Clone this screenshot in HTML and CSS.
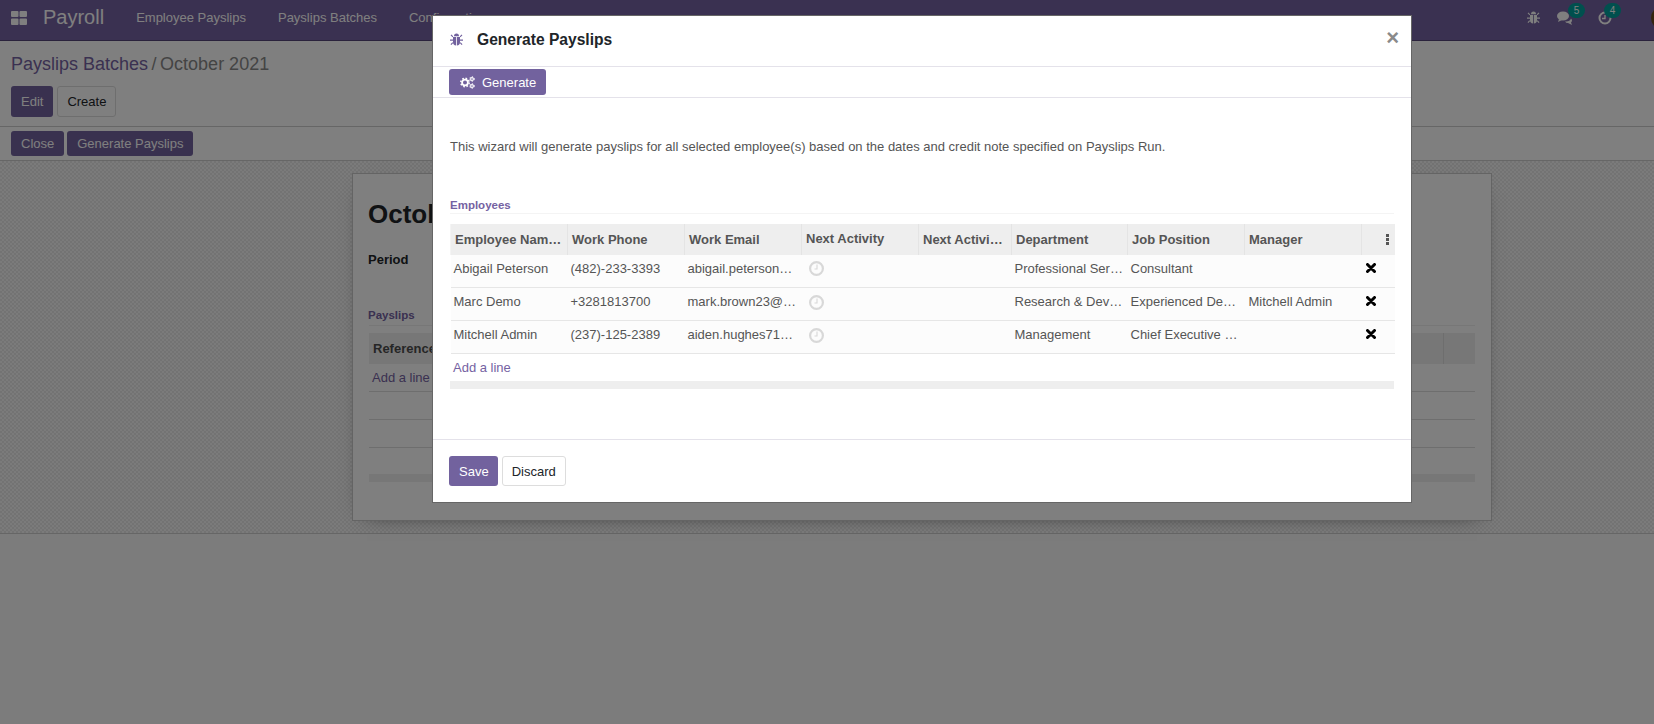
FILE: index.html
```html
<!DOCTYPE html>
<html lang="en">
<head>
  <meta charset="UTF-8" />
  <title>Payroll</title>
  <link rel="stylesheet" href="styles.css">
</head>
<body>
  <header class="navbar">
    <svg class="apps-icon" width="16" height="14" viewBox="0 0 16 14"><path d="M0 1Q0 0 1 0h5.500q1 0 1 1v4q0 1-1 1H1Q0 6 0 5zM8.500 1q0-1 1-1H15q1 0 1 1v4q0 1-1 1H9.500q-1 0-1-1zM0 8.500q0-1 1-1h5.500q1 0 1 1V13q0 1-1 1H1q-1 0-1-1zM8.500 8.500q0-1 1-1H15q1 0 1 1V13q0 1-1 1H9.500q-1 0-1-1z" fill="currentColor"/></svg>
    <span class="brand">Payroll</span>
    <nav class="menu">
      <a>Employee Payslips</a>
      <a>Payslips Batches</a>
      <a>Configuration</a>
    </nav>
    <div class="systray">
      <svg class="bug" width="13" height="13" viewBox="0 0 13 13"><path d="M4 3.200Q4 .6 6.500 .6T9 3.200zM3 4h3.100v8.500Q3 12.300 3 9zM6.900 4H10v5q0 3.300-3.100 3.500zM.6 2.200l.9-.8L3.300 3.500l-.8.800zM12.400 2.200l-.9-.8L9.700 3.500l.8.800zM0 6.500h3v1.200H0zM10 6.500h3v1.200h-3zM2.400 9.300l.8.800L1.400 12l-.9-.8zM10.600 9.300l-.8.800L11.600 12l.9-.8z" fill="currentColor"/></svg>
      <span class="tray-item tray-chat">
        <svg width="16" height="14" viewBox="0 0 16 14"><ellipse cx="6" cy="5" rx="6" ry="4.500" fill="currentColor"/><path d="M2 8 1 11l4-2zM9 10.500q4 0 5-3 2 2 0 4l1 2.500-4-2q-2 0-3-1.500z" fill="currentColor"/></svg>
        <b class="badge">5</b>
      </span>
      <span class="tray-item tray-clock">
        <svg width="14" height="14" viewBox="0 0 14 14"><circle cx="7" cy="7" r="5.500" fill="none" stroke="currentColor" stroke-width="2"/><path d="M7 4v3.500H4" fill="none" stroke="currentColor" stroke-width="1.300"/></svg>
        <b class="badge">4</b>
      </span>
      <span class="avatar"></span>
    </div>
  </header>

  <section class="control-panel">
    <h2 class="breadcrumb"><a>Payslips Batches</a><span class="sep">/</span><span>October 2021</span></h2>
    <div class="actions">
      <button class="btn btn-primary btn-edit">Edit</button>
      <button class="btn btn-plain btn-edit">Create</button>
    </div>
  </section>
  <div class="statusbar">
    <button class="btn btn-primary">Close</button>
    <button class="btn btn-primary">Generate Payslips</button>
  </div>

  <main class="sheet-bg">
    <div class="sheet">
      <h1 class="sheet-title">October 2021</h1>
      <div class="sheet-label">Period</div>
      <div class="sheet-section">Payslips</div>
      <div class="sheet-thead">Reference<span class="sheet-col"></span></div>
      <div class="sheet-row"><a>Add a line</a></div>
      <div class="sheet-row"></div>
      <div class="sheet-row"></div>
      <div class="sheet-bar"></div>
    </div>
  </main>

  <div class="backdrop"></div>

  <div class="modal">
    <div class="modal-head">
      <svg class="modal-bug" width="13" height="13" viewBox="0 0 13 13"><path d="M4 3.200Q4 .6 6.500 .6T9 3.200zM3 4h3.100v8.500Q3 12.300 3 9zM6.900 4H10v5q0 3.300-3.100 3.500zM.6 2.200l.9-.8L3.300 3.500l-.8.800zM12.400 2.200l-.9-.8L9.700 3.500l.8.800zM0 6.500h3v1.200H0zM10 6.500h3v1.200h-3zM2.400 9.300l.8.800L1.400 12l-.9-.8zM10.600 9.300l-.8.800L11.600 12l.9-.8z" fill="currentColor"/></svg>
      <h4 class="modal-title">Generate Payslips</h4>
      <span class="modal-close">×</span>
    </div>
    <div class="modal-toolbar">
      <button class="btn btn-modal btn-generate">
        <svg width="15" height="13" viewBox="0 0 15 13" fill="none" stroke="currentColor"><circle cx="5" cy="6.500" r="2.900" stroke-width="1.800"/><circle cx="5" cy="6.500" r="4.200" stroke-width="1.500" stroke-dasharray="1.650 1.650"/><circle cx="12" cy="3" r="1.400" stroke-width="1.100"/><circle cx="12" cy="3" r="2.300" stroke-width="1" stroke-dasharray="1.200 1.200"/><circle cx="12" cy="10" r="1.400" stroke-width="1.100"/><circle cx="12" cy="10" r="2.300" stroke-width="1" stroke-dasharray="1.200 1.200"/></svg>
        Generate
      </button>
    </div>
    <div class="modal-body">
      <p class="intro">This wizard will generate payslips for all selected employee(s) based on the dates and credit note specified on Payslips Run.</p>
      <div class="section-title">Employees</div>
      <table class="emp-table">
        <colgroup>
          <col class="c-m"><col class="c-m"><col class="c-m"><col class="c-m"><col class="c-s"><col class="c-n"><col class="c-m"><col class="c-m"><col class="c-x">
        </colgroup>
        <thead>
          <tr>
            <th>Employee Nam…</th>
            <th>Work Phone</th>
            <th>Work Email</th>
            <th class="th-raised">Next Activity</th>
            <th>Next Activi…</th>
            <th>Department</th>
            <th>Job Position</th>
            <th>Manager</th>
            <th class="th-opt"><svg width="3" height="11" viewBox="0 0 3 11"><path d="M0 0h3v3H0zM0 4h3v3H0zM0 8h3v3H0z" fill="currentColor"/></svg></th>
          </tr>
        </thead>
        <tbody>
          <tr>
            <td>Abigail Peterson</td>
            <td>(482)-233-3393</td>
            <td>abigail.peterson…</td>
            <td class="td-clock"><svg width="15" height="15" viewBox="0 0 15 15"><circle cx="7.500" cy="7.500" r="6.400" fill="none" stroke="#d8d8d8" stroke-width="2.200"/><path d="M8 3.500V8H5.500" fill="none" stroke="#d8d8d8" stroke-width="1.100"/></svg></td>
            <td></td>
            <td>Professional Ser…</td>
            <td>Consultant</td>
            <td></td>
            <td class="td-del"><svg width="10" height="10" viewBox="0 0 10 10"><path d="M1.500 1.500l7 7M8.500 1.500l-7 7" stroke="#000" stroke-width="3" stroke-linecap="round"/></svg></td>
          </tr>
          <tr>
            <td>Marc Demo</td>
            <td>+3281813700</td>
            <td>mark.brown23@…</td>
            <td class="td-clock"><svg width="15" height="15" viewBox="0 0 15 15"><circle cx="7.500" cy="7.500" r="6.400" fill="none" stroke="#d8d8d8" stroke-width="2.200"/><path d="M8 3.500V8H5.500" fill="none" stroke="#d8d8d8" stroke-width="1.100"/></svg></td>
            <td></td>
            <td>Research &amp; Dev…</td>
            <td>Experienced De…</td>
            <td class="td-manager">Mitchell Admin</td>
            <td class="td-del"><svg width="10" height="10" viewBox="0 0 10 10"><path d="M1.500 1.500l7 7M8.500 1.500l-7 7" stroke="#000" stroke-width="3" stroke-linecap="round"/></svg></td>
          </tr>
          <tr>
            <td>Mitchell Admin</td>
            <td>(237)-125-2389</td>
            <td>aiden.hughes71…</td>
            <td class="td-clock"><svg width="15" height="15" viewBox="0 0 15 15"><circle cx="7.500" cy="7.500" r="6.400" fill="none" stroke="#d8d8d8" stroke-width="2.200"/><path d="M8 3.500V8H5.500" fill="none" stroke="#d8d8d8" stroke-width="1.100"/></svg></td>
            <td></td>
            <td>Management</td>
            <td>Chief Executive …</td>
            <td></td>
            <td class="td-del"><svg width="10" height="10" viewBox="0 0 10 10"><path d="M1.500 1.500l7 7M8.500 1.500l-7 7" stroke="#000" stroke-width="3" stroke-linecap="round"/></svg></td>
          </tr>
        </tbody>
      </table>
      <div class="add-line"><a>Add a line</a></div>
      <div class="table-foot"></div>
    </div>
    <div class="modal-foot">
      <button class="btn btn-modal btn-tall btn-save">Save</button>
      <button class="btn btn-white btn-tall">Discard</button>
    </div>
  </div>
</body>
</html>
```

FILE: styles.css
```css
html,
body {
  height: 100%;
}

body {
  margin: 0;
  height: 724px;
  overflow: hidden;
  position: relative;
  background-color: #f8f8f8;
  color: #4c4c4c;
  font-family: "Liberation Sans", Arial, sans-serif;
  font-size: 13px;
}

.btn {
  border: 1px solid transparent;
  border-radius: 3px;
  padding: 0 9px;
  font-family: inherit;
  font-size: 13px;
  line-height: 1;
}

.btn-primary {
  height: 25px;
  background-color: #72629e;
  color: #fff;
}

.btn-plain {
  background-color: #fff;
  border-color: #ddd;
  color: #212529;
}

.btn-edit {
  height: 31px;
}

/* top bar */
.navbar {
  height: 41px;
  box-sizing: border-box;
  display: flex;
  align-items: center;
  padding-bottom: 5px;
  background-color: #7562a2;
  border-bottom: 1px solid #544578;
  color: #fff;
}

.apps-icon {
  margin-left: 11px;
}

.brand {
  margin-left: 16px;
  font-size: 20px;
}

.menu {
  display: flex;
  gap: 32px;
  margin-left: 32px;
}

.systray {
  margin-left: auto;
  display: flex;
  align-items: center;
}

.bug {
  margin-right: 17px;
}

.tray-item {
  position: relative;
  display: flex;
}

.tray-chat {
  margin-right: 25px;
}

.tray-clock {
  margin-right: 39px;
}

.badge {
  position: absolute;
  top: -8px;
  left: 11px;
  min-width: 17px;
  height: 15px;
  border-radius: 8px;
  background-color: #00a09d;
  font-size: 10px;
  line-height: 15px;
  font-weight: 400;
  text-align: center;
}

.tray-clock .badge {
  left: 6px;
}

.avatar {
  width: 24px;
  height: 24px;
  margin-right: -21px;
  border-radius: 50%;
  background-color: #6b4a1f;
}

/* control panel */
.control-panel {
  height: 86px;
  box-sizing: border-box;
  padding: 13px 11px 0;
  background-color: #fff;
  border-bottom: 1px solid #ccc;
}

.breadcrumb {
  margin: 0;
  font-size: 18px;
  font-weight: 400;
  line-height: 20px;
  color: #888;
}

.breadcrumb a {
  color: #7562a2;
}

.sep {
  margin: 0 3.5px;
}

.actions {
  display: flex;
  gap: 4px;
  margin-top: 12px;
}

.statusbar {
  height: 34px;
  box-sizing: border-box;
  display: flex;
  gap: 3px;
  padding: 4px 11px 0;
  background-color: #fff;
  border-bottom: 1px solid #ccc;
}

/* form behind the dialog */
.sheet-bg {
  height: 373px;
  box-sizing: border-box;
  padding-top: 12px;
  border-bottom: 1px solid #ccc;
  background-color: #eee;
  background-image: repeating-conic-gradient(#e6e6e6 0 25%, #f6f6f6 0 50%);
  background-size: 4px 4px;
}

.sheet {
  width: 1140px;
  height: 348px;
  box-sizing: border-box;
  margin-left: 352px;
  padding: 24px 16px 0;
  background-color: #fff;
  border: 1px solid #c8c8c8;
  box-shadow: 0 5px 20px -15px #000;
}

.sheet-title {
  margin: 0 0 0 -1px;
  font-size: 26px;
  line-height: 32px;
  color: #212529;
}

.sheet-label {
  margin: 22px 0 0 -1px;
  font-weight: 700;
  color: #212529;
}

.sheet-section {
  margin-top: 42px;
  padding-bottom: 3px;
  border-bottom: 1px solid #eee;
  font-size: 11.5px;
  line-height: 13px;
  text-indent: -1px;
  font-weight: 700;
  color: #7562a2;
}

.sheet-thead {
  position: relative;
  height: 31px;
  box-sizing: border-box;
  margin-top: 7px;
  padding: 8px 4px;
  background-color: #eee;
  font-weight: 700;
}

.sheet-col {
  position: absolute;
  top: 0;
  bottom: 0;
  right: 31px;
  border-left: 1px solid #ddd;
}

.sheet-row {
  height: 28px;
  box-sizing: border-box;
  padding: 6px 3px;
  border-bottom: 1px solid #ddd;
  color: #7562a2;
}

.sheet-bar {
  height: 8px;
  margin-top: 26px;
  background-color: #eee;
}

.backdrop {
  position: absolute;
  inset: 0;
  background-color: rgba(0, 0, 0, 0.5);
}

/* dialog */
.modal {
  position: absolute;
  left: 433px;
  top: 16px;
  width: 978px;
  height: 486px;
  display: flex;
  flex-direction: column;
  background-color: #fff;
  color: #555;
  box-shadow: 0 0 0 1px #666;
}

.modal-head {
  height: 51px;
  flex: none;
  box-sizing: border-box;
  display: flex;
  align-items: center;
  padding: 0 12px 3px 17px;
  border-bottom: 1px solid #e4e2ea;
}

.modal-bug {
  color: #72629e;
}

.modal-title {
  margin: 0 0 0 14px;
  font-size: 15.6px;
  color: #212529;
}

.modal-close {
  margin: -4px 0 0 auto;
  font-size: 22px;
  line-height: 20px;
  font-weight: 700;
  color: #8a8a8a;
}

.modal-toolbar {
  height: 31px;
  flex: none;
  box-sizing: border-box;
  padding: 2px 16px 0;
  border-bottom: 1px solid #e4e2ea;
}

.btn-modal {
  background-color: #72629e;
  color: #fff;
}

.btn-white {
  background-color: #fff;
  border-color: #ddd;
  color: #212529;
}

.btn-generate {
  height: 26px;
  display: flex;
  align-items: center;
  gap: 7px;
  padding: 0 9px 0 10px;
}

.btn-tall {
  height: 30px;
}

.btn-save {
  padding: 0 8px 0 9px;
}

.modal-body {
  flex: 1;
  padding: 0 17px;
}

.intro {
  margin: 41px 0 0;
  line-height: 16px;
}

.section-title {
  margin-top: 44px;
  padding-bottom: 1px;
  border-bottom: 1px solid #f4f4f4;
  font-size: 11.5px;
  line-height: 13px;
  font-weight: 700;
  color: #7562a2;
}

.emp-table {
  width: 944px;
  margin-top: 10px;
  border-collapse: collapse;
  table-layout: fixed;
}

.c-m {
  width: 117px;
}

.c-n {
  width: 116px;
}

.c-s {
  width: 93px;
}

.c-x {
  width: 33px;
}

.emp-table th,
.emp-table td {
  overflow: hidden;
  white-space: nowrap;
  text-align: left;
  box-sizing: border-box;
}

.emp-table th {
  height: 31px;
  padding: 0 4px;
  background-color: #eee;
  border-left: 1px solid #e4e4e4;
  font-weight: 700;
  color: #555;
}

.emp-table th:first-child {
  border-left-color: #f4f4f4;
}

.th-raised {
  padding-bottom: 3px !important;
}

.th-opt {
  text-align: right !important;
  padding-right: 6px !important;
  line-height: 0;
}

.emp-table td {
  height: 33px;
  padding: 0 3px 5px 3px;
  background-color: #fcfcfc;
  border-bottom: 1px solid #e6e6e6;
}

.emp-table tbody tr:first-child td {
  height: 32px;
  padding-bottom: 4px;
}

.emp-table .td-clock {
  padding: 0 0 3px 7px;
}

.td-clock svg {
  display: block;
}

.emp-table .td-del {
  padding-left: 4px;
}

.emp-table .td-manager {
  padding-left: 4px;
}

.add-line {
  height: 27px;
  box-sizing: border-box;
  padding: 6px 3px;
  color: #7562a2;
}

.table-foot {
  height: 8px;
  background-color: #eee;
}

.modal-foot {
  height: 63px;
  flex: none;
  box-sizing: border-box;
  display: flex;
  gap: 4px;
  padding: 16px 16px 0;
  border-top: 1px solid #e4e2ea;
}
```
